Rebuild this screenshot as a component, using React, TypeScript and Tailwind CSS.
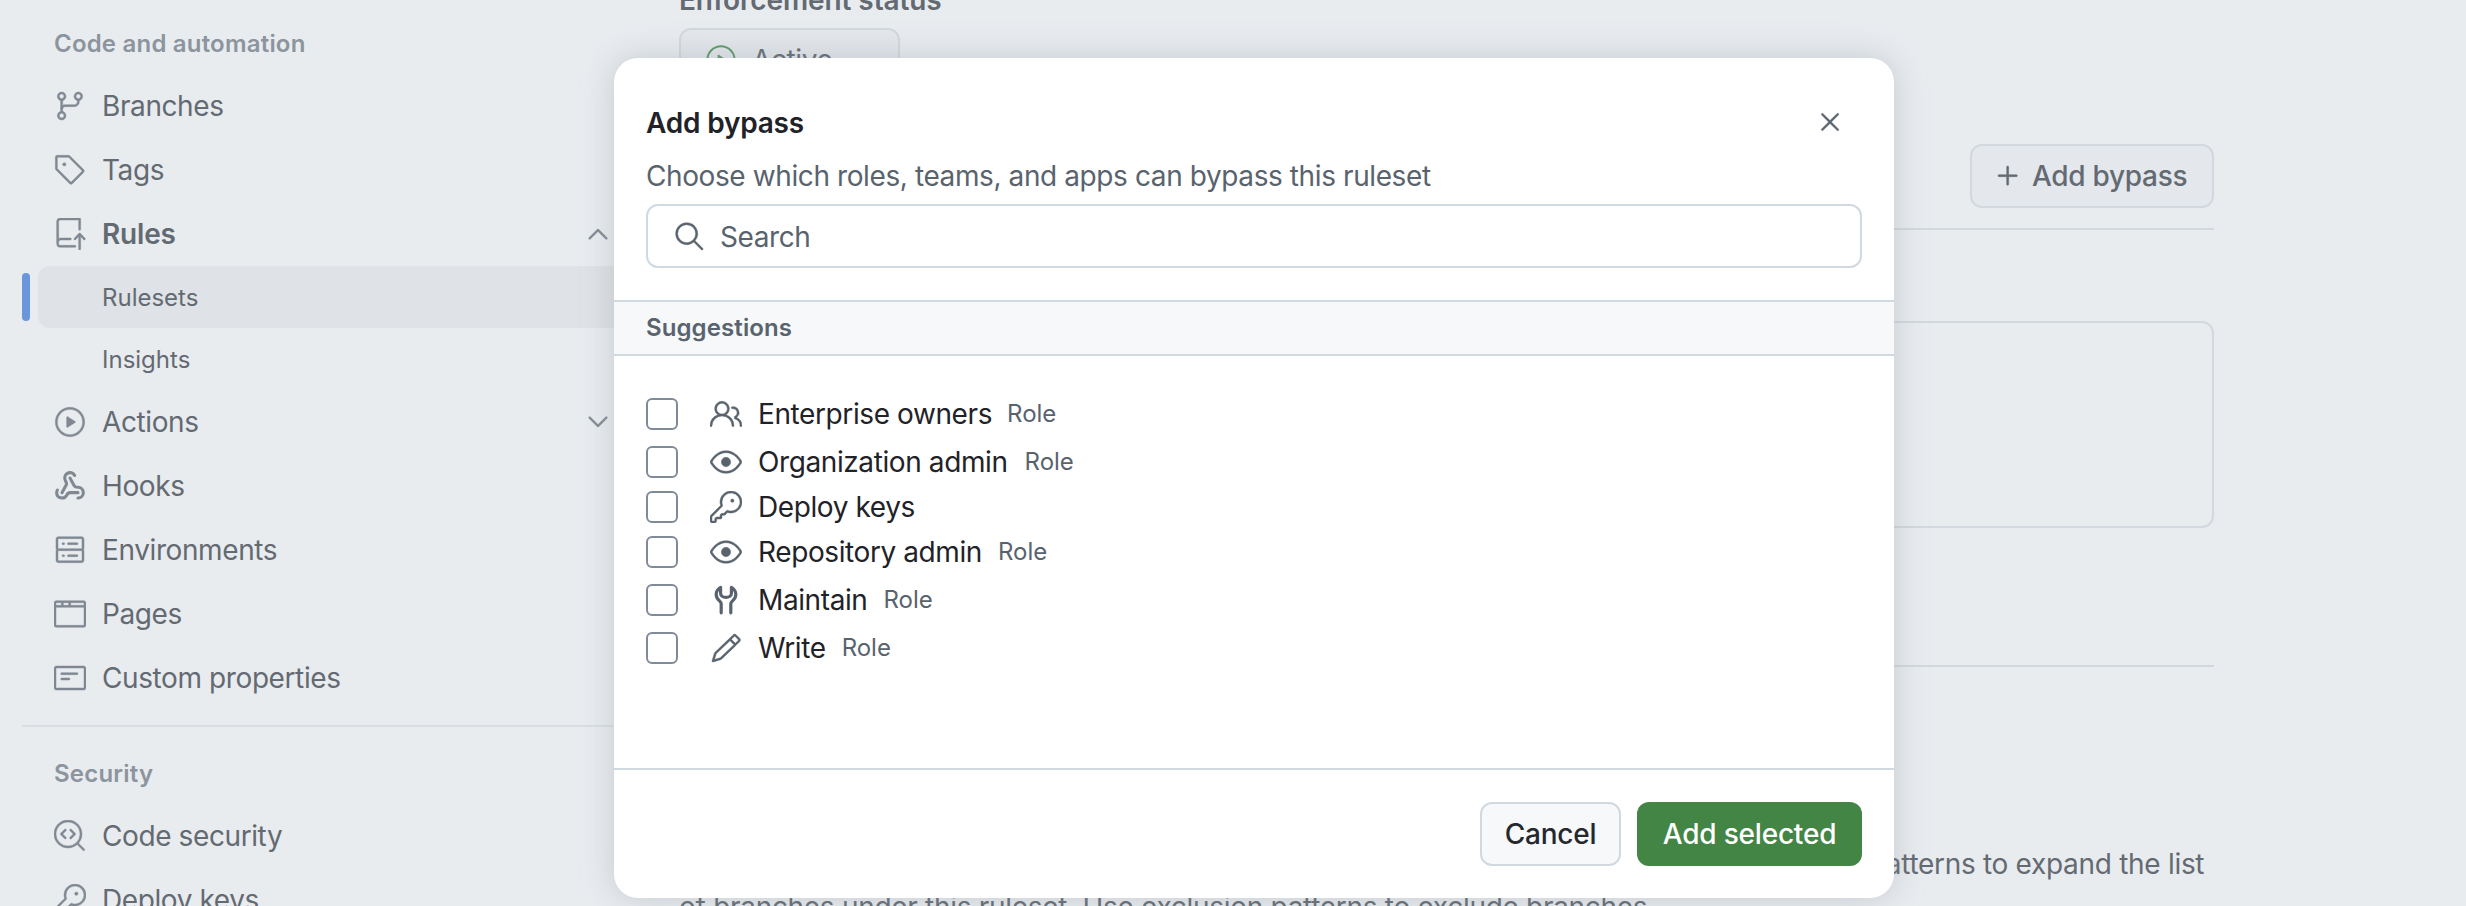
import type { ReactNode } from 'react';
import { Webhook } from 'lucide-react';
import {
  GoBrowser,
  GoChevronDown,
  GoChevronUp,
  GoCodescan,
  GoEye,
  GoGitBranch,
  GoKey,
  GoNote,
  GoPencil,
  GoPeople,
  GoPlay,
  GoPlus,
  GoRepoPush,
  GoSearch,
  GoServer,
  GoTag,
  GoX,
} from 'react-icons/go';

const WrenchIcon = () => (
  <span className="flex">
    <svg viewBox="0 0 16 16" fill="none" stroke="currentColor" strokeWidth="1.6" strokeLinecap="round" strokeLinejoin="round" className="h-8 w-8">
      <path d="M5.6 14.4V9.9C5.6 9.2 5.2 8.9 4.5 8.2 3.6 7.4 3.1 6.5 3.1 5.3 3.1 3.8 3.9 2.5 5.3 1.7v3c0 1.1 1.2 2 2.7 2s2.7-.9 2.7-2v-3c1.4.8 2.2 2.1 2.2 3.6 0 1.2-.5 2.1-1.4 2.9-.7.7-1.1 1-1.1 1.7v4.5" />
    </svg>
  </span>
);

const NavRow = ({ icon, label, bold, right }: { icon: ReactNode; label: string; bold?: boolean; right?: ReactNode }) => (
  <div className="flex h-16 items-center pl-8 text-[28px] tracking-[-0.4px] text-[#636a72]">
    <span className="flex w-12 shrink-0 text-[32px] text-[#808892] [&>svg]:[stroke-width:0.35]">{icon}</span>
    <span className={bold ? 'font-semibold tracking-[-0.2px]' : ''}>{label}</span>
    {right && <span className="ml-auto flex pr-4 text-[32px] text-[#808892] [&>svg]:[stroke-width:0.35]">{right}</span>}
  </div>
);

const roles = [
  { name: 'Enterprise owners', icon: <GoPeople />, role: true, gap: 'mt-0', roleGap: 'ml-[15px]' },
  { name: 'Organization admin', icon: <GoEye />, role: true, gap: 'mt-4', roleGap: 'ml-[17px]' },
  { name: 'Deploy keys', icon: <GoKey />, role: false, gap: 'mt-[13px]', roleGap: '' },
  { name: 'Repository admin', icon: <GoEye />, role: true, gap: 'mt-[13px]', roleGap: 'ml-4' },
  { name: 'Maintain', icon: <WrenchIcon />, role: true, gap: 'mt-4', roleGap: 'ml-4' },
  { name: 'Write', icon: <GoPencil />, role: true, gap: 'mt-4', roleGap: 'ml-4' },
];

export default function App() {
  return (
    <div className="relative h-[906px] w-[2466px] overflow-hidden bg-[#e9ecef] font-['Inter',sans-serif]">
      <div className="flex">
        <aside className="w-[630px] shrink-0 pl-[22px] pt-[19px]">
          <div className="mb-[7px] flex h-12 items-center pl-8 pt-[1px] text-[24px] font-semibold tracking-[0.2px] text-[#8c949e]">Code and automation</div>
          <NavRow icon={<GoGitBranch />} label="Branches" />
          <NavRow icon={<GoTag />} label="Tags" />
          <NavRow icon={<GoRepoPush />} label="Rules" bold right={<GoChevronUp />} />
          <div className="relative ml-4 flex h-[62px] items-center rounded-l-xl bg-[#dfe2e6] pl-[64px] pt-[1px] text-[24px] text-[#636a72]">
            <span className="absolute -left-4 top-[7px] h-12 w-2 rounded bg-[#6a96dc]" />
            Rulesets
          </div>
          <div className="ml-4 flex h-[62px] items-center pl-[64px] pt-[1px] text-[24px] text-[#636a72]">Insights</div>
          <NavRow icon={<GoPlay />} label="Actions" right={<GoChevronDown />} />
          <NavRow
            icon={
              <span className="flex">
                <Webhook className="h-8 w-8" strokeWidth={2.3} />
              </span>
            }
            label="Hooks"
          />
          <NavRow icon={<GoServer />} label="Environments" />
          <NavRow icon={<GoBrowser />} label="Pages" />
          <NavRow icon={<GoNote />} label="Custom properties" />
          <div className="mt-[15px] h-[2px] bg-[#dadee3]" />
          <div className="mb-[7px] mt-[22px] flex h-12 items-center pl-8 pt-[1px] text-[24px] font-semibold tracking-[0.2px] text-[#8c949e]">Security</div>
          <NavRow icon={<GoCodescan />} label="Code security" />
          <NavRow icon={<GoKey />} label="Deploy keys" />
        </aside>

        <main className="ml-[49px] w-[1535px] shrink-0 -mt-5">
          <div className="h-10 text-[28px] font-semibold leading-10 tracking-[-0.1px] text-[#636a72]">Enforcement status</div>
          <div className="mt-2 flex h-16 w-[221px] items-center gap-[15px] rounded-xl border-2 border-[#d3d8de] bg-[#e4e7eb] pl-6 text-[28px] tracking-[-0.4px] text-[#636a72]">
            <GoPlay className="h-8 w-8 text-[#5c9a67]" />
            Active
          </div>
          <div className="mt-[52px] flex justify-end">
            <div className="flex h-16 w-[244px] items-center gap-2 rounded-xl border-2 border-[#d3d8de] bg-[#e4e7eb] pl-[20px] text-[28px] font-medium tracking-[-0.3px] text-[#636a72]">
              <GoPlus className="h-8 w-8 [stroke-width:0.35]" />
              Add bypass
            </div>
          </div>
          <div className="mt-5 h-[2px] bg-[#d3d8de]" />
          <div className="mt-[91px] h-[207px] rounded-xl border-2 border-[#d3d8de]" />
          <div className="mt-[137px] h-[2px] bg-[#d3d8de]" />
          <p className="mt-[176px] whitespace-nowrap text-[28px] leading-[43px] tracking-[-0.3px] text-[#636a72]">
            Branch targeting determines which branches will be protected by this ruleset. Use inclusion patterns to expand the list
            <br />
            of branches under this ruleset. Use exclusion patterns to exclude branches.
          </p>
        </main>
      </div>

      <div className="absolute left-[614px] top-[58px] flex h-[840px] w-[1280px] flex-col rounded-3xl bg-white shadow-[0_0_32px_rgba(140,149,159,0.4)]">
        <div className="px-8 pt-[45px]">
          <div className="flex h-10 items-center justify-between">
            <h2 className="text-[28px] font-semibold tracking-[-0.2px] text-[#1f2328]">Add bypass</h2>
            <span className="flex w-16 justify-center pb-[2px] text-[32px] text-[#59636e] [&>svg]:[stroke-width:0.35]">
              <GoX />
            </span>
          </div>
          <p className="mt-[13px] h-10 text-[28px] leading-10 tracking-[-0.4px] text-[#59636e]">Choose which roles, teams, and apps can bypass this ruleset</p>
          <div className="mt-2 flex h-16 items-center gap-[15px] rounded-xl border-2 border-[#d1d9e0] pl-[25px] text-[28px] tracking-[-0.4px] text-[#59636e]">
            <GoSearch className="h-8 w-8 [stroke-width:0.35]" />
            <span className="pt-[2px]">Search</span>
          </div>
        </div>
        <div className="mt-8 flex h-14 items-center border-y-2 border-[#d1d9e0] bg-[#f6f8fa] px-8 text-[24px] font-semibold tracking-[0.1px] text-[#59636e]">Suggestions</div>
        <ul className="flex-1 px-8 pt-[42px]">
          {roles.map(r => (
            <li key={r.name} className={`flex h-8 items-center ${r.gap}`}>
              <span className="h-8 w-8 rounded-md border-2 border-[#818b98]" />
              <span className="ml-8 flex w-12 text-[32px] text-[#59636e] [&>svg]:[stroke-width:0.35]">{r.icon}</span>
              <span className="text-[28px] tracking-[-0.4px] text-[#1f2328]">{r.name}</span>
              {r.role && <span className={`${r.roleGap} text-[24px] text-[#59636e]`}>Role</span>}
            </li>
          ))}
        </ul>
        <div className="flex justify-end gap-4 border-t-2 border-[#d1d9e0] px-8 pb-8 pt-8">
          <button type="button" className="h-16 w-[141px] rounded-xl border-2 border-[#d1d9e0] bg-[#f6f8fa] text-[28px] font-medium tracking-[-0.2px] text-[#25292e]">
            Cancel
          </button>
          <button type="button" className="h-16 w-[225px] rounded-xl bg-[#438545] text-[28px] font-medium tracking-[-0.2px] text-white">
            Add selected
          </button>
        </div>
      </div>
    </div>
  );
}
